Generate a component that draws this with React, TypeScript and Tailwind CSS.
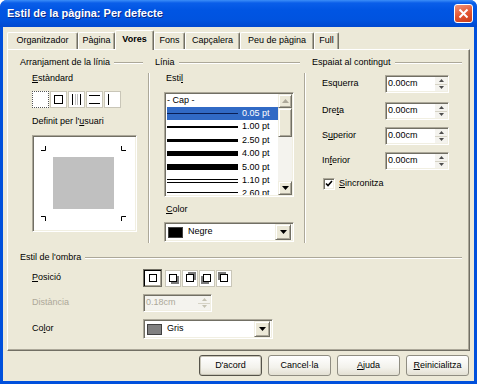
import React from 'react';

const sunken =
  'border border-t-[#aca899] border-l-[#aca899] border-b-white border-r-white shadow-[inset_1px_1px_0_#716f64,inset_-1px_-1px_0_#f1efe2]';
const raised =
  'bg-[#ece9d8] border border-t-[#f1efe2] border-l-[#f1efe2] border-b-[#716f64] border-r-[#716f64] shadow-[inset_1px_1px_0_#ffffff,inset_-1px_-1px_0_#aca899]';

function U({ children }: { children: React.ReactNode }) {
  return <span className="underline underline-offset-[1px] decoration-[1px]">{children}</span>;
}

function HLine() {
  return <div className="flex-1 ml-[4px] h-[2px] border-t border-t-[#aca899] border-b border-b-white" />;
}

function VLine() {
  return <div className="mt-[16px] h-[170px] w-[2px] border-l border-l-[#aca899] border-r border-r-white" />;
}

function Header({ children }: { children: React.ReactNode }) {
  return (
    <div className="flex items-center h-[11px] leading-[11px]">
      <span className="whitespace-nowrap">{children}</span>
      <HLine />
    </div>
  );
}

function Arrow({ down = true, color = '#000' }: { down?: boolean; color?: string }) {
  return (
    <svg width="7" height="4" viewBox="0 0 7 4">
      <path d={down ? 'M0 0h7L3.5 4z' : 'M0 4h7L3.5 0z'} fill={color} />
    </svg>
  );
}

function Spin({ value, w, disabled }: { value: string; w: string; disabled?: boolean }) {
  return (
    <div className={`flex h-[18px] ${w} ${sunken} ${disabled ? 'bg-[#f4f3ee]' : 'bg-white'}`}>
      <div className={`flex-1 flex items-center pl-[2px] ${disabled ? 'text-[#aca899]' : ''}`}>{value}</div>
      <div className="w-[12px] flex flex-col my-[1px] mr-[1px]">
        <div className="flex-1 flex items-center justify-center bg-[#f4f3ee] border-b border-b-[#d6d3c6]">
          <svg width="5" height="3" viewBox="0 0 5 3"><path d="M0 3h5L2.5 0z" fill={disabled ? '#c5c2b2' : '#4d4d4d'} /></svg>
        </div>
        <div className="flex-1 flex items-center justify-center bg-[#f4f3ee]">
          <svg width="5" height="3" viewBox="0 0 5 3"><path d="M0 0h5L2.5 3z" fill={disabled ? '#c5c2b2' : '#4d4d4d'} /></svg>
        </div>
      </div>
    </div>
  );
}

function Dropdown({ swatch, label, w }: { swatch: string; label: string; w: string }) {
  return (
    <div className={`flex items-center h-[20px] ${w} ${sunken} bg-white pl-[3px] pr-[2px]`}>
      <div className={`w-[15px] h-[11px] border border-[#404040] ${swatch}`} />
      <span className="ml-[5px] flex-1">{label}</span>
      <div className={`w-[16px] h-[16px] flex items-center justify-center ${raised}`}>
        <Arrow />
      </div>
    </div>
  );
}

function StdBox({ kind, focus }: { kind: number; focus?: boolean }) {
  return (
    <div className={`w-[17px] h-[17px] bg-white border ${focus ? 'border-dotted border-[#555]' : 'border-[#c9c6b8]'}`}>
      <svg width="15" height="15" viewBox="0 0 15 15">
        {kind === 1 && <rect x="3.5" y="3.5" width="8" height="8" fill="none" stroke="#000" />}
        {kind === 2 && (
          <>
            <path d="M3.5 2v11M11.5 2v11" stroke="#000" />
            <path d="M6.5 2v11M8.5 2v11" stroke="#c0c0c0" />
          </>
        )}
        {kind === 3 && (
          <>
            <path d="M2 3.5h11M2 11.5h11" stroke="#000" />
          </>
        )}
        {kind === 4 && <path d="M3.5 2v11" stroke="#000" />}
      </svg>
    </div>
  );
}

function ShadowIcon({ pos, sel }: { pos: number; sel?: boolean }) {
  const sx = pos === 1 || pos === 2 ? 2 : pos === 0 ? 0 : -2;
  const sy = pos === 1 || pos === 3 ? 2 : pos === 0 ? 0 : -2;
  return (
    <div
      className={`flex items-center justify-center bg-white ${
        sel
          ? 'w-[19px] h-[18px] border border-[#716f64] shadow-[inset_1px_1px_0_#000,inset_-1px_-1px_0_#aca899]'
          : 'w-[16px] h-[17px] ml-[1px] border border-[#c9c6b8]'
      }`}
    >
      <svg width="12" height="12" viewBox="0 0 12 12">
        {pos !== 0 && <rect x={2 + sx} y={2 + sy} width="8" height="8" fill="#7a7a7a" />}
        <rect x="2.5" y="2.5" width="7" height="7" fill="#fff" stroke="#000" />
      </svg>
    </div>
  );
}

const lines = [
  { t: '0.05 pt', h: 'h-[1px]', sel: true },
  { t: '1.00 pt', h: 'h-[2px]' },
  { t: '2.50 pt', h: 'h-[3px]' },
  { t: '4.00 pt', h: 'h-[5px]' },
  { t: '5.00 pt', h: 'h-[6px]' },
  { t: '1.10 pt', h: 'h-[4px]', dbl: true },
  { t: '2.60 pt', h: 'h-[5px]', dbl: true },
];

const tabs = [
  { label: 'Organitzador', w: 'w-[71px]' },
  { label: 'Pàgina', w: 'w-[37px]' },
  { label: 'Vores', w: 'w-[39px]', sel: true },
  { label: 'Fons', w: 'w-[31px]' },
  { label: 'Capçalera', w: 'w-[55px]' },
  { label: 'Peu de pàgina', w: 'w-[74px]' },
  { label: 'Full', w: 'w-[25px]' },
];

export default function App() {
  return (
    <div className="w-[477px] h-[384px] flex flex-col rounded-t-[7px] overflow-hidden bg-[#0050dc] font-['Liberation_Sans',Arial,sans-serif] text-[9px] text-black">
      {/* Title bar */}
      <div className="h-[27px] flex items-center justify-between pl-[7px] pr-[4px] bg-[linear-gradient(180deg,#3c8ef8_0px,#0a5ee9_3px,#0055e3_10px,#0053df_20px,#0049d0_27px)]">
        <span className="text-white font-bold text-[11px] [text-shadow:1px_1px_0_#0a2a8a]">
          Estil de la pàgina: Per defecte
        </span>
        <div className="w-[19px] h-[19px] rounded-[3px] border border-white bg-[linear-gradient(160deg,#f0937a,#e2542f_55%,#c83d1c)] flex items-center justify-center">
          <svg width="11" height="11" viewBox="0 0 11 11">
            <path d="M1.5 1.5l8 8M9.5 1.5l-8 8" stroke="#fff" strokeWidth="2" />
          </svg>
        </div>
      </div>

      {/* Body */}
      <div className="flex-1 mx-[3px] mb-[3px] bg-[#ece9d8] px-[4px] pt-[3px] flex flex-col">
        {/* Tabs */}
        <div className="flex items-end h-[19px]">
          {tabs.map((t) => (
            <div
              key={t.label}
              className={`${t.w} flex items-center justify-center bg-[#ece9d8] border-t border-l border-white border-r border-r-[#716f64] shadow-[inset_-1px_0_0_#aca899] rounded-t-[2px] ${
                t.sel ? 'h-[20px] -mb-[1px] relative z-10 font-bold pb-[1px]' : 'h-[17px]'
              }`}
            >
              {t.label}
            </div>
          ))}
        </div>

        {/* Panel */}
        <div className="h-[302px] border border-t-white border-l-white border-r-[#716f64] border-b-[#716f64] shadow-[inset_-1px_-1px_0_#aca899] pl-[12px] pr-[7px] pt-[7px] flex flex-col">
          <div className="flex items-start">
            {/* Arranjament */}
            <div className="w-[123px] flex flex-col">
              <Header>Arranjament de la línia</Header>
              <div className="pl-[12px] flex flex-col">
                <div className="mt-[5px] h-[11px] leading-[11px]"><U>E</U>stàndard</div>
                <div className="mt-[7px] flex gap-[1px]">
                  <StdBox kind={0} focus />
                  <StdBox kind={1} />
                  <StdBox kind={2} />
                  <StdBox kind={3} />
                  <StdBox kind={4} />
                </div>
                <div className="mt-[8px] h-[11px] leading-[11px]">Definit per l'<U>u</U>suari</div>
                <div className={`mt-[8px] w-[105px] h-[97px] bg-white ${sunken}`}>
                  <svg width="101" height="93" viewBox="0 0 101 93">
                    <rect x="20" y="21" width="61" height="52" fill="#c0c0c0" />
                    <path
                      d="M8 14.5h4.5V10M88.5 10v4.5H93M8 80.5h4.5V85M88.5 85v-4.5H93"
                      fill="none"
                      stroke="#000"
                    />
                  </svg>
                </div>
              </div>
            </div>

            <div className="ml-[5px]"><VLine /></div>

            {/* Línia */}
            <div className="ml-[5px] w-[145px] flex flex-col">
              <Header>Línia</Header>
              <div className="pl-[9px] flex flex-col">
                <div className="pl-[2px] mt-[5px] h-[11px] leading-[11px]">Esti<U>l</U></div>
                <div className={`mt-[8px] w-[130px] h-[105px] bg-white ${sunken} flex p-[1px]`}>
                  <div className="flex-1 flex flex-col overflow-hidden pl-[1px]">
                    <div className="h-[13px] flex items-center">- Cap -</div>
                    {lines.map((l) => (
                      <div
                        key={l.t}
                        className={`h-[13.4px] shrink-0 flex items-center ${l.sel ? 'bg-[#316ac5] text-white' : ''}`}
                      >
                        {l.dbl ? (
                          <div className={`w-[71px] ${l.h} flex flex-col justify-between`}>
                            <div className="h-[1px] bg-black" />
                            <div className="h-[1px] bg-black" />
                          </div>
                        ) : (
                          <div className={`w-[71px] ${l.h} ${l.sel ? 'bg-[#0a1f55]' : 'bg-black'}`} />
                        )}
                        <span className="ml-[4px]">{l.t}</span>
                      </div>
                    ))}
                  </div>
                  <div className="w-[14px] flex flex-col bg-[#f4f3ee]">
                    <div className={`h-[14px] flex items-center justify-center ${raised}`}>
                      <Arrow down={false} color="#aca899" />
                    </div>
                    <div className={`h-[29px] ${raised}`} />
                    <div className="flex-1" />
                    <div className={`h-[14px] flex items-center justify-center ${raised}`}>
                      <Arrow />
                    </div>
                  </div>
                </div>
                <div className="pl-[2px] mt-[7px] h-[11px] leading-[11px]"><U>C</U>olor</div>
                <div className="mt-[7px]">
                  <Dropdown swatch="bg-black" label="Negre" w="w-[130px]" />
                </div>
              </div>
            </div>

            <div className="ml-[4px]"><VLine /></div>

            {/* Espaiat */}
            <div className="ml-[6px] w-[150px] flex flex-col">
              <Header>Espaiat al contingut</Header>
              <div className="pl-[10px] flex flex-col">
                {[
                  { l: <>Esquerra</>, mt: 'mt-[7px]' },
                  { l: <>Dre<U>t</U>a</>, mt: 'mt-[9px]' },
                  { l: <>S<U>u</U>perior</>, mt: 'mt-[7px]' },
                  { l: <>In<U>f</U>erior</>, mt: 'mt-[7px]' },
                ].map((r, i) => (
                  <div key={i} className={`${r.mt} flex items-center h-[18px]`}>
                    <div className="w-[63px]">{r.l}</div>
                    <Spin value="0.00cm" w="w-[64px]" />
                  </div>
                ))}
                <div className="mt-[7px] flex items-center h-[13px] pl-[1px]">
                  <div className={`w-[12px] h-[12px] bg-white ${sunken} flex items-center justify-center`}>
                    <svg width="8" height="8" viewBox="0 0 8 8">
                      <path d="M1 3.5l2 2 4-4.5" fill="none" stroke="#000" strokeWidth="1.6" />
                    </svg>
                  </div>
                  <span className="ml-[4px]"><U>S</U>incronitza</span>
                </div>
              </div>
            </div>
          </div>

          {/* Estil de l'ombra */}
          <div className="mt-[9px] flex flex-col">
            <Header>Estil de l'ombra</Header>
            <div className="pl-[12px] flex flex-col">
              <div className="mt-[6px] flex items-center h-[18px]">
                <div className="w-[111px]"><U>P</U>osició</div>
                <ShadowIcon pos={0} sel />
                <div className="w-[2px]" />
                <ShadowIcon pos={1} />
                <ShadowIcon pos={2} />
                <ShadowIcon pos={3} />
                <ShadowIcon pos={4} />
              </div>
              <div className="mt-[7px] flex items-center h-[18px]">
                <div className="w-[111px] text-[#aca899]">Distància</div>
                <Spin value="0.18cm" w="w-[69px]" disabled />
              </div>
              <div className="mt-[7px] flex items-center h-[20px]">
                <div className="w-[111px]">Co<U>l</U>or</div>
                <Dropdown swatch="bg-[#808080]" label="Gris" w="w-[130px]" />
              </div>
            </div>
          </div>
        </div>

        {/* Buttons */}
        <div className="mt-[4px] flex justify-end gap-[6px] pr-[1px]">
          {[
            { l: <>D'acord</>, def: true },
            { l: <>Cancel·la</> },
            { l: <><U>A</U>juda</> },
            { l: <><U>R</U>einicialitza</> },
          ].map((b, i) => (
            <div
              key={i}
              className={`w-[63px] h-[21px] flex items-center justify-center rounded-[3px] bg-[linear-gradient(180deg,#ffffff,#f3f2ec_60%,#e3e0d3)] border ${
                b.def ? 'border-[#55534a] shadow-[inset_0_0_0_1px_#c9c6b8]' : 'border-[#8f8d82]'
              }`}
            >
              {b.l}
            </div>
          ))}
        </div>
      </div>
    </div>
  );
}
